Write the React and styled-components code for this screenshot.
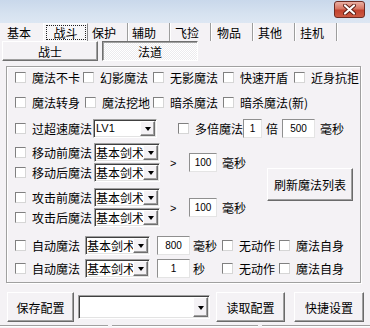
import React from 'react';
import styled, { createGlobalStyle } from 'styled-components';

const GlobalStyle = createGlobalStyle`
  html, body {
    margin: 0;
    padding: 0;
    background: #f4f2f5;
  }
  body {
    font-family: "Noto Sans CJK SC", "Noto Sans", sans-serif;
    font-size: 12px;
    color: #000;
  }
`;

const Window = styled.div`
  width: 370px;
  height: 328px;
  background: #f4f2f5;
  display: flex;
  flex-direction: column;
  overflow: hidden;
`;

const TitleBar = styled.div`
  height: 23px;
  flex: none;
  display: flex;
  justify-content: flex-end;
  align-items: flex-start;
  padding-right: 5px;
  background: linear-gradient(180deg, #c9d8eb 0%, #d6e2f0 60%, #dde7f3 100%);
`;

const CloseButton = styled.div`
  width: 31px;
  height: 17px;
  margin-top: 1px;
  box-sizing: border-box;
  border: 1px solid #6e2b22;
  border-radius: 3px;
  background: linear-gradient(180deg, #eab0a4 0%, #d77562 45%, #c2432f 55%, #cc5a43 100%);
  display: flex;
  align-items: center;
  justify-content: center;
`;

const TabStrip = styled.div`
  height: 18px;
  flex: none;
  display: flex;
  align-items: stretch;
`;

const Tab = styled.div`
  width: ${(p) => p.w}px;
  flex: none;
  box-sizing: border-box;
  padding-left: ${(p) => p.pl ?? 5}px;
  display: flex;
  align-items: center;
  border-right: ${(p) => (p.last ? 'none' : '1px solid #9d9d9d')};
  box-shadow: ${(p) => (p.last ? 'none' : '1px 0 0 #fff')};
`;

const ActiveTab = styled.div`
  width: 45px;
  flex: none;
  box-sizing: border-box;
  display: flex;
  align-items: center;
  justify-content: center;
  border-left: 1px solid #fff;
  border-top: 1px solid #fff;
  border-right: 1px solid #8a8a8a;
  background: #f8f7f9;
`;

const FocusRing = styled.span`
  width: 40px;
  height: 15px;
  box-sizing: border-box;
  outline: 1px dotted #222;
  outline-offset: -1px;
  display: flex;
  align-items: center;
  justify-content: center;
`;

const SubTabRow = styled.div`
  height: 20px;
  flex: none;
  display: flex;
  gap: 4px;
  padding-left: 2px;
`;

const SubTab = styled.div`
  width: 96px;
  box-sizing: border-box;
  display: flex;
  align-items: center;
  justify-content: center;
  border: 1px solid;
  border-color: ${(p) =>
    p.pressed ? '#6f6f6f #fff #fff #6f6f6f' : '#fff #6f6f6f #6f6f6f #fff'};
  box-shadow: ${(p) =>
    p.pressed ? 'inset 1px 1px 0 #a0a0a0' : 'inset -1px -1px 0 #a0a0a0'};
  background: ${(p) =>
    p.pressed
      ? 'repeating-conic-gradient(#ffffff 0 25%, #ecebee 0 50%) 0 0 / 2px 2px'
      : 'transparent'};
`;

const GroupBox = styled.div`
  width: 355px;
  box-sizing: border-box;
  margin: 5px 0 0 6px;
  border: 1px solid #a0a0a0;
  box-shadow: inset 1px 1px 0 #fff, 1px 1px 0 #fff;
  padding: 0 0 4px 8px;
  display: flex;
  flex-direction: column;
  flex: none;
`;

const Row = styled.div`
  display: flex;
  align-items: center;
  height: ${(p) => p.h ?? 20}px;
  margin-top: ${(p) => p.mt ?? 0}px;
  flex: none;
`;

const CheckLabel = styled.label`
  display: flex;
  align-items: center;
  width: ${(p) => (p.w ? `${p.w}px` : 'auto')};
  margin-left: ${(p) => p.ml ?? 0}px;
  flex: none;
  white-space: nowrap;
`;

const Box = styled.span`
  width: 11px;
  height: 11px;
  box-sizing: border-box;
  border: 1px solid;
  border-color: #808080 #d6d6d6 #d6d6d6 #808080;
  background: #fff;
  margin-right: 6px;
  flex: none;
`;

const Combo = styled.div`
  width: ${(p) => p.w}px;
  height: ${(p) => p.h ?? 19}px;
  margin-left: ${(p) => p.ml ?? 0}px;
  box-sizing: border-box;
  border: 1px solid;
  border-color: #a0a0a0 #fff #fff #a0a0a0;
  box-shadow: inset 1px 1px 0 #404040, inset -1px -1px 0 #e3e3e3;
  background: #fff;
  padding: 1px;
  display: flex;
  align-items: stretch;
  flex: none;
  overflow: hidden;
`;

const ComboText = styled.span`
  flex: 1;
  min-width: 0;
  overflow: hidden;
  white-space: nowrap;
  display: flex;
  align-items: center;
  padding-left: ${(p) => (p.latin ? 1 : 0)}px;
  font-family: ${(p) =>
    p.latin ? '"Liberation Sans", Arial, sans-serif' : 'inherit'};
  font-size: ${(p) => (p.latin ? '11px' : '12px')};
`;

const DropButton = styled.span`
  width: 15px;
  flex: none;
  box-sizing: border-box;
  border: 1px solid;
  border-color: #fff #6f6f6f #6f6f6f #fff;
  box-shadow: inset -1px -1px 0 #a0a0a0;
  background: #f4f2f5;
  display: flex;
  align-items: center;
  justify-content: center;
  &::after {
    content: '';
    border-left: 3.5px solid transparent;
    border-right: 3.5px solid transparent;
    border-top: 4px solid #000;
    margin-top: 1px;
  }
`;

const Field = styled.div`
  width: ${(p) => p.w}px;
  height: 19px;
  margin-left: ${(p) => p.ml ?? 0}px;
  box-sizing: border-box;
  border: 1px solid;
  border-color: #8f8f8f #e4e4e4 #e4e4e4 #8f8f8f;
  background: #fff;
  display: flex;
  align-items: center;
  justify-content: center;
  font-family: "Liberation Sans", Arial, sans-serif;
  font-size: 10px;
  flex: none;
`;

const Unit = styled.span`
  margin-left: ${(p) => p.ml ?? 0}px;
  width: ${(p) => (p.w ? `${p.w}px` : 'auto')};
  flex: none;
  white-space: nowrap;
`;

const Section = styled.div`
  display: flex;
  align-items: center;
  margin-top: 4px;
  flex: none;
`;

const Stack = styled.div`
  display: flex;
  flex-direction: column;
  gap: 5px;
  flex: none;
`;

const Pair = styled.div`
  display: flex;
  flex-direction: column;
`;

const DelayRow = styled.div`
  height: 40px;
  display: flex;
  align-items: center;
`;

const Arrow = styled.span`
  width: 19px;
  flex: none;
  font-family: "Liberation Sans", Arial, sans-serif;
  font-size: 11px;
  padding-top: 2px;
`;

const PushButton = styled.div`
  width: ${(p) => p.w}px;
  height: ${(p) => p.h}px;
  margin-left: ${(p) => p.ml ?? 0}px;
  box-sizing: border-box;
  border: 1px solid;
  border-color: #fff #6a6a6a #6a6a6a #fff;
  box-shadow: inset -1px -1px 0 #a0a0a0;
  background: #f4f2f5;
  display: flex;
  align-items: center;
  justify-content: center;
  flex: none;
  white-space: nowrap;
`;

const BottomBar = styled.div`
  height: 30px;
  margin-top: 9px;
  padding-left: 7px;
  display: flex;
  align-items: center;
  flex: none;
`;

const StatusBar = styled.div`
  height: 3px;
  margin-top: 3px;
  display: flex;
  gap: 4px;
  flex: none;
`;

const StatusPane = styled.div`
  width: ${(p) => (p.w ? `${p.w}px` : 'auto')};
  flex: ${(p) => (p.w ? 'none' : '1')};
  border-top: 1px solid #a0a0a0;
  box-shadow: inset 0 1px 0 #fff;
`;

const Check = ({ w, ml, children }) => (
  <CheckLabel w={w} ml={ml}>
    <Box />
    {children}
  </CheckLabel>
);

const Select = ({ w, ml, h, latin, value }) => (
  <Combo w={w} ml={ml} h={h}>
    <ComboText latin={latin}>{value}</ComboText>
    <DropButton />
  </Combo>
);

const CloseIcon = () => (
  <svg width="13" height="11" viewBox="0 0 13 11">
    <path d="M2 1.5 L11 9.5 M11 1.5 L2 9.5" stroke="#5b1c13" strokeWidth="4" strokeLinecap="round" />
    <path d="M2 1.5 L11 9.5 M11 1.5 L2 9.5" stroke="#fff" strokeWidth="2.2" strokeLinecap="round" />
  </svg>
);

const App = () => {
  return (
    <Window>
      <GlobalStyle />
      <TitleBar>
        <CloseButton>
          <CloseIcon />
        </CloseButton>
      </TitleBar>

      <TabStrip>
        <Tab w={43} pl={7} last>基本</Tab>
        <ActiveTab>
          <FocusRing>战斗</FocusRing>
        </ActiveTab>
        <Tab w={40} pl={4}>保护</Tab>
        <Tab w={42} pl={4}>辅助</Tab>
        <Tab w={41}>飞捡</Tab>
        <Tab w={42} pl={6}>物品</Tab>
        <Tab w={42}>其他</Tab>
        <Tab w={42}>挂机</Tab>
      </TabStrip>

      <SubTabRow>
        <SubTab>战士</SubTab>
        <SubTab pressed>法道</SubTab>
      </SubTabRow>

      <GroupBox>
        <Row h={21}>
          <Check w={68}>魔法不卡</Check>
          <Check w={70}>幻影魔法</Check>
          <Check w={70}>无影魔法</Check>
          <Check w={71}>快速开盾</Check>
          <Check>近身抗拒</Check>
        </Row>
        <Row h={21} mt={4}>
          <Check w={70}>魔法转身</Check>
          <Check w={68}>魔法挖地</Check>
          <Check w={70}>暗杀魔法</Check>
          <Check>暗杀魔法(新)</Check>
        </Row>
        <Row mt={5}>
          <Check w={78}>过超速魔法</Check>
          <Select w={64} latin value="LV1" />
          <Check ml={21}>多倍魔法</Check>
          <Field w={19}>1</Field>
          <Unit ml={4}>倍</Unit>
          <Field w={33} ml={4}>500</Field>
          <Unit ml={5}>毫秒</Unit>
        </Row>

        <Section>
          <Stack>
            <Pair>
              <Row>
                <Check w={79}>移动前魔法</Check>
                <Select w={66} value="基本剑术" />
              </Row>
              <Row>
                <Check w={79}>移动后魔法</Check>
                <Select w={66} value="基本剑术" />
              </Row>
            </Pair>
            <Pair>
              <Row>
                <Check w={79}>攻击前魔法</Check>
                <Select w={66} value="基本剑术" />
              </Row>
              <Row>
                <Check w={79}>攻击后魔法</Check>
                <Select w={66} value="基本剑术" />
              </Row>
            </Pair>
          </Stack>
          <Stack style={{ marginLeft: 10 }}>
            <DelayRow>
              <Arrow>&gt;</Arrow>
              <Field w={28}>100</Field>
              <Unit ml={5}>毫秒</Unit>
            </DelayRow>
            <DelayRow>
              <Arrow>&gt;</Arrow>
              <Field w={28}>100</Field>
              <Unit ml={5}>毫秒</Unit>
            </DelayRow>
          </Stack>
          <PushButton w={86} h={33} ml={21}>刷新魔法列表</PushButton>
        </Section>

        <Row mt={8}>
          <Check w={70}>自动魔法</Check>
          <Select w={65} value="基本剑术" />
          <Field w={33} ml={7}>800</Field>
          <Unit ml={3} w={29}>毫秒</Unit>
          <Check w={57}>无动作</Check>
          <Check>魔法自身</Check>
        </Row>
        <Row mt={3}>
          <Check w={70}>自动魔法</Check>
          <Select w={65} value="基本剑术" />
          <Field w={33} ml={7}>1</Field>
          <Unit ml={3} w={29}>秒</Unit>
          <Check w={57}>无动作</Check>
          <Check>魔法自身</Check>
        </Row>
      </GroupBox>

      <BottomBar>
        <PushButton w={67} h={30}>保存配置</PushButton>
        <Select w={132} h={24} ml={4} value="" />
        <PushButton w={69} h={30} ml={6}>读取配置</PushButton>
        <PushButton w={70} h={30} ml={9}>快捷设置</PushButton>
      </BottomBar>

      <StatusBar>
        <StatusPane w={108} />
        <StatusPane w={146} />
        <StatusPane />
      </StatusBar>
    </Window>
  );
};

export default App;
